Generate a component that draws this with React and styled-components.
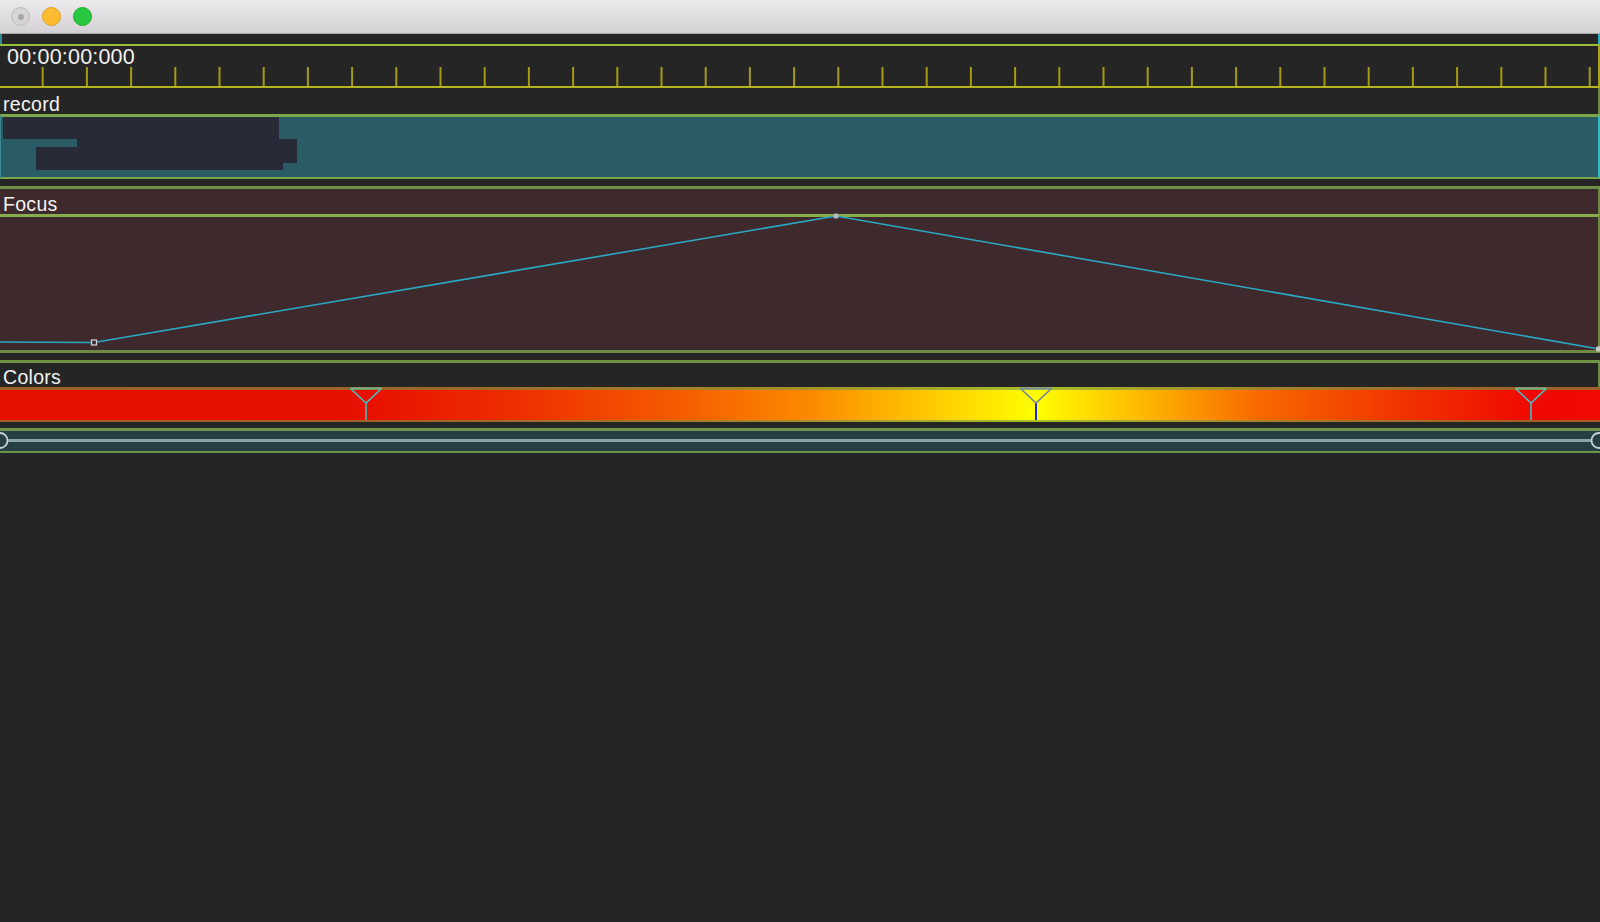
import React from "react";
import styled, { createGlobalStyle } from "styled-components";

const GlobalStyle = createGlobalStyle`
  html, body {
    margin: 0;
    padding: 0;
    background: #252525;
  }
  body {
    font-family: "Liberation Sans", Arial, sans-serif;
  }
`;

const Window = styled.div`
  width: 1600px;
  height: 922px;
  background: #252525;
  overflow: hidden;
  display: flex;
  flex-direction: column;
`;

const TitleBar = styled.div`
  height: 33px;
  border-bottom: 1px solid #a9a7a9;
  background: linear-gradient(#eceaec, #d3d1d3);
  display: flex;
  align-items: center;
  gap: 12px;
  padding-left: 11px;
`;

const Light = styled.div`
  width: 17px;
  height: 17px;
  border-radius: 50%;
  background: ${(p) => p.$fill};
  border: 1px solid ${(p) => p.$edge};
  display: flex;
  align-items: center;
  justify-content: center;
  &::after {
    content: "";
    display: ${(p) => (p.$dot ? "block" : "none")};
    width: 6px;
    height: 6px;
    border-radius: 50%;
    background: #a8a8a8;
  }
`;

const TopStrip = styled.div`
  height: 10px;
  border-left: 2px solid #2b8d99;
  border-right: 2px solid #2fb0c0;
`;

const Ruler = styled.div`
  height: 40px;
  border-top: 2px solid #98bd3b;
  border-bottom: 2px solid #b3b41e;
  border-right: 2px solid #a9a41c;
  display: flex;
  flex-direction: column;
`;

const Timecode = styled.div`
  box-sizing: border-box;
  height: 21px;
  padding: 2px 0 0 7px;
  font-size: 21.5px;
  line-height: 19px;
  letter-spacing: 0.2px;
  color: #f2f2f2;
`;

const Ticks = styled.svg`
  display: block;
  width: 1598px;
  height: 19px;
`;

const Track = styled.div`
  background: ${(p) => p.$bg || "transparent"};
  border-top: ${(p) => (p.$top ? `3px solid ${p.$top}` : "none")};
`;

const Label = styled.div`
  height: ${(p) => p.$h}px;
  display: flex;
  align-items: flex-end;
  padding-left: 3px;
  font-size: 19.5px;
  line-height: 19px;
  letter-spacing: 0.3px;
  color: #f3f3f3;
  border-right: 2px solid #6c8a43;
`;

const ClipLane = styled.div`
  position: relative;
  height: 60px;
  background: #2a5c66;
  border-top: 3px solid #7ba84c;
  border-bottom: 2px solid #79a64a;
  border-left: 1px solid #3d8790;
  border-right: 2px solid #35b8c8;
`;

const Clip = styled.div`
  position: absolute;
  left: ${(p) => p.$x}px;
  top: ${(p) => p.$y}px;
  width: ${(p) => p.$w}px;
  height: ${(p) => p.$h}px;
  background: #292a37;
`;

const Gap = styled.div`
  height: ${(p) => p.$h}px;
`;

const CurveLane = styled.div`
  position: relative;
  height: 133px;
  border-top: 3px solid #86ac4c;
  border-bottom: 3px solid #6e8a42;
  border-right: 2px solid #6e8a42;
`;

const Overlay = styled.svg`
  position: absolute;
  left: 0;
  top: ${(p) => p.$top}px;
  overflow: visible;
`;

const GradientBar = styled.div`
  position: relative;
  height: 30px;
  border-top: 3px solid rgba(112, 150, 64, 0.62);
  border-bottom: 2px solid rgba(112, 150, 64, 0.62);
  background-origin: border-box;
  background-image: linear-gradient(
    to right,
    #e60f00 0px,
    #e81000 366px,
    #ee3000 520px,
    #f65c00 680px,
    #fb8a00 810px,
    #ffc400 920px,
    #ffff00 1036px,
    #ffc000 1130px,
    #f86800 1260px,
    #f23400 1400px,
    #f00900 1531px,
    #f00a00 1600px
  );
`;

const Marker = styled.svg`
  position: absolute;
  left: ${(p) => p.$x - 17}px;
  top: -3px;
  width: 34px;
  height: 35px;
  overflow: visible;
`;

const SliderLane = styled.div`
  position: relative;
  height: 20px;
  background: #263f45;
  border-top: 3px solid #6f9447;
  border-bottom: 2px solid #6f9447;
`;

const tickXs = Array.from({ length: 36 }, (_, k) => 42.7 + 44.2 * k);

const markers = [
  { x: 366, side: "#3ec6d0", top: "#6fb98c", stem: "#5f9a9c" },
  { x: 1036, side: "#6a7fa2", top: "#7a90a0", stem: "#2424dc" },
  { x: 1531, side: "#3ec6d0", top: "#6fb98c", stem: "#5f9a9c" },
];

export default function App() {
  return (
    <Window>
      <GlobalStyle />
      <TitleBar>
        <Light $fill="#d6d4d6" $edge="#bdbbbd" $dot />
        <Light $fill="#fdbc2f" $edge="#dea123" />
        <Light $fill="#28c840" $edge="#1dad2b" />
      </TitleBar>

      <TopStrip />
      <Ruler>
        <Timecode>00:00:00:000</Timecode>
        <Ticks viewBox="0 0 1598 19">
          {tickXs.map((x) => (
            <rect key={x} x={x - 1} y={0} width={2} height={19} fill="#a39b12" />
          ))}
        </Ticks>
      </Ruler>

      <Track>
        <Label $h={26}>record</Label>
        <ClipLane>
          <Clip $x={2} $y={0} $w={276} $h={22} />
          <Clip $x={76} $y={22} $w={220} $h={24} />
          <Clip $x={35} $y={30} $w={247} $h={23} />
        </ClipLane>
      </Track>

      <Gap $h={7} />

      <Track $bg="#3e292d" $top="#6f8d45">
        <Label $h={25}>Focus</Label>
        <CurveLane>
          <Overlay $top={-3} width="1600" height="139" viewBox="0 0 1600 139">
            <polyline
              points="0,128 94,128.5 836,2 1599,135"
              fill="none"
              stroke="#2ba8c2"
              strokeWidth="1.6"
            />
            <rect x="91.5" y="126" width="5" height="5" fill="#3e292d" stroke="#d0d0d0" strokeWidth="1.3" />
            <rect x="833.5" y="-0.5" width="5" height="5" rx="1.5" fill="#b9b9b9" />
            <rect x="1596" y="132.5" width="5" height="5" rx="1.5" fill="#c9c9c9" />
          </Overlay>
        </CurveLane>
      </Track>

      <Gap $h={7} />

      <Track $top="#6f9447">
        <Label $h={24}>Colors</Label>
        <GradientBar>
          {markers.map((m) => (
            <Marker key={m.x} $x={m.x} viewBox="0 0 34 35">
              <line x1="17" y1="16" x2="17" y2="33" stroke={m.stem} strokeWidth="2" />
              <polyline points="1.5,1.5 17,16 32.5,1.5" fill="none" stroke={m.side} strokeWidth="1.5" />
              <line x1="1.5" y1="1.5" x2="32.5" y2="1.5" stroke={m.top} strokeWidth="2" />
            </Marker>
          ))}
        </GradientBar>
      </Track>

      <Gap $h={6} />

      <SliderLane>
        <Overlay $top={0} width="1600" height="20" viewBox="0 0 1600 20">
          <rect x="7" y="8" width="1584" height="3" fill="#8ba3a6" />
          <circle cx="0" cy="9.5" r="7.5" fill="none" stroke="#c5d3d3" strokeWidth="1.8" />
          <circle cx="1599" cy="9.5" r="7.5" fill="none" stroke="#c5d3d3" strokeWidth="1.8" />
        </Overlay>
      </SliderLane>
    </Window>
  );
}
